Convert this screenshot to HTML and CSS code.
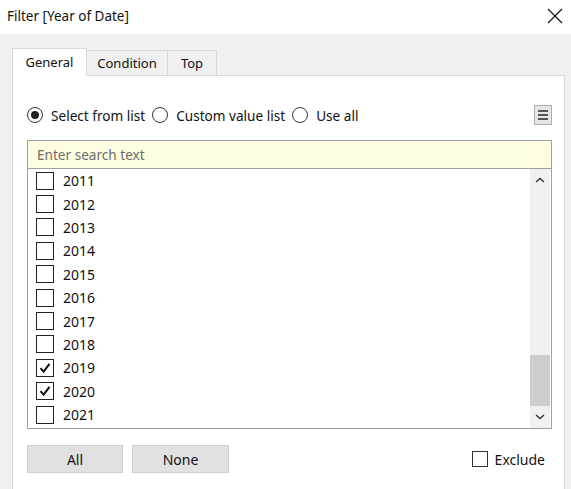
FILE: index.html
```html
<!DOCTYPE html>
<html>
<head>
<meta charset="utf-8">
<link rel="stylesheet" href="styles.css">
</head>
<body>
<div class="window">
  <div class="titlebar">
    <span class="title">Filter [Year of Date]</span>
    <svg class="close" width="16" height="16" viewBox="0 0 16 16"><path d="M1 1L15 15M15 1L1 15" stroke="#111" stroke-width="1.2" fill="none"/></svg>
  </div>
  <div class="body">
    <div class="tabs">
      <div class="tab active">General</div>
      <div class="tab">Condition</div>
      <div class="tab">Top</div>
    </div>
    <div class="panel">
      <div class="moderow">
        <label class="radio"><span class="rbtn on"></span>Select from list</label>
        <label class="radio"><span class="rbtn"></span>Custom value list</label>
        <label class="radio"><span class="rbtn"></span>Use all</label>
        <span class="menubtn"><span></span><span></span><span></span></span>
      </div>
      <div class="search">Enter search text</div>
      <div class="list">
        <div class="items">
          <div class="item"><span class="cb"></span>2011</div>
          <div class="item"><span class="cb"></span>2012</div>
          <div class="item"><span class="cb"></span>2013</div>
          <div class="item"><span class="cb"></span>2014</div>
          <div class="item"><span class="cb"></span>2015</div>
          <div class="item"><span class="cb"></span>2016</div>
          <div class="item"><span class="cb"></span>2017</div>
          <div class="item"><span class="cb"></span>2018</div>
          <div class="item"><span class="cb"><svg width="14" height="14" viewBox="0 0 14 14"><path d="M2.5 7.2L5.6 10.6L11.5 2.8" stroke="#111" stroke-width="2" fill="none"/></svg></span>2019</div>
          <div class="item"><span class="cb"><svg width="14" height="14" viewBox="0 0 14 14"><path d="M2.5 7.2L5.6 10.6L11.5 2.8" stroke="#111" stroke-width="2" fill="none"/></svg></span>2020</div>
          <div class="item"><span class="cb"></span>2021</div>
        </div>
        <div class="scrollbar">
          <div class="arrow"><svg width="10" height="6" viewBox="0 0 10 6"><path d="M1 5L5 1.5L9 5" stroke="#333" stroke-width="1.4" fill="none"/></svg></div>
          <div class="track"></div>
          <div class="thumb"></div>
          <div class="arrow"><svg width="10" height="6" viewBox="0 0 10 6"><path d="M1 1L5 4.5L9 1" stroke="#333" stroke-width="1.4" fill="none"/></svg></div>
        </div>
      </div>
      <div class="buttons">
        <div class="btn all">All</div>
        <div class="btn none">None</div>
        <label class="exclude"><span class="xcb"></span>Exclude</label>
      </div>
    </div>
  </div>
</div>
</body>
</html>
```
FILE: styles.css
```css
html, body {
  margin: 0;
  padding: 0;
}
body {
  width: 571px;
  height: 489px;
  overflow: hidden;
  background: #f0f0f0;
  font-family: "Noto Sans", "Open Sans", sans-serif;
  font-size: 14px;
  color: #111;
}
.window {
  display: flex;
  flex-direction: column;
  height: 489px;
}
.titlebar {
  height: 34px;
  background: #fff;
  display: flex;
  align-items: center;
  justify-content: space-between;
  padding: 0 8px 2px 7px;
  box-sizing: border-box;
}
.title {
  font-size: 13.5px;
}
.body {
  flex: 1;
  background: #f0f0f0;
  padding: 14px 6px 0 12px;
  display: flex;
  flex-direction: column;
}
.tabs {
  display: flex;
  align-items: flex-end;
  height: 27px;
  position: relative;
  z-index: 1;
}
.tab {
  height: 25px;
  box-sizing: border-box;
  border: 1px solid #d9d9d9;
  border-bottom: none;
  background: #f0f0f0;
  display: flex;
  align-items: center;
  justify-content: center;
  font-size: 13px;
  margin-left: -1px;
}
.tab:nth-child(2) { width: 82px; }
.tab:nth-child(3) { width: 50px; }
.tab.active {
  height: 28px;
  margin-bottom: -1px;
  width: 75px;
  margin-left: 0;
  background: #fff;
  border-color: #d9d9d9;
  padding-bottom: 2px;
}
.panel {
  flex: 1;
  background: #fff;
  border: 1px solid #d9d9d9;
  border-bottom: none;
  padding: 0 12px 0 14px;
  display: flex;
  flex-direction: column;
}
.moderow {
  margin-top: 29px;
  height: 20px;
  display: flex;
  align-items: center;
  font-size: 13.6px;
}
.radio {
  display: flex;
  align-items: center;
  margin-right: 7px;
  white-space: nowrap;
}
.rbtn {
  width: 14px;
  height: 14px;
  border: 1px solid #333;
  border-radius: 50%;
  margin-right: 8px;
  display: flex;
  align-items: center;
  justify-content: center;
  box-sizing: content-box;
}
.rbtn.on::after {
  content: "";
  width: 8px;
  height: 8px;
  border-radius: 50%;
  background: #222;
}
.menubtn {
  margin-left: auto;
  width: 18px;
  height: 20px;
  box-sizing: border-box;
  border: 1px solid #adadad;
  background: #e6e6e6;
  display: flex;
  flex-direction: column;
  align-items: center;
  justify-content: center;
  gap: 2px;
}
.menubtn span {
  width: 10px;
  height: 2px;
  background: #555;
}
.search {
  margin-top: 15px;
  height: 29px;
  box-sizing: border-box;
  border: 1px solid #a0a0a0;
  background: #fffde1;
  color: #6d6d6d;
  display: flex;
  align-items: center;
  padding-left: 9px;
  font-size: 13.6px;
}
.list {
  height: 260px;
  box-sizing: border-box;
  border: 1px solid #a0a0a0;
  border-top: none;
  display: flex;
  overflow: hidden;
}
.items {
  flex: 1;
  padding: 0 0 0 8px;
}
.item {
  height: 23.4px;
  display: flex;
  align-items: center;
  font-size: 14px;
}
.cb {
  width: 18px;
  height: 18px;
  box-sizing: border-box;
  border: 1.5px solid #222;
  margin-right: 9px;
  display: flex;
  align-items: center;
  justify-content: center;
}
.scrollbar {
  width: 20px;
  margin-right: 1px;
  background: #f0f0f0;
  display: flex;
  flex-direction: column;
}
.arrow {
  height: 22px;
  display: flex;
  align-items: center;
  justify-content: center;
}
.track {
  flex: 1;
}
.thumb {
  height: 51px;
  background: #cdcdcd;
}
.buttons {
  margin-top: 16px;
  display: flex;
  align-items: center;
}
.btn {
  height: 28px;
  box-sizing: border-box;
  border: 1px solid #cfcfcf;
  background: #e1e1e1;
  display: flex;
  align-items: center;
  justify-content: center;
}
.btn.all { width: 96px; }
.btn.none { width: 97px; margin-left: 9px; }
.exclude {
  margin-left: auto;
  margin-right: 7px;
  display: flex;
  align-items: center;
}
.xcb {
  width: 16px;
  height: 16px;
  box-sizing: border-box;
  border: 1px solid #333;
  margin-right: 7px;
}
```
